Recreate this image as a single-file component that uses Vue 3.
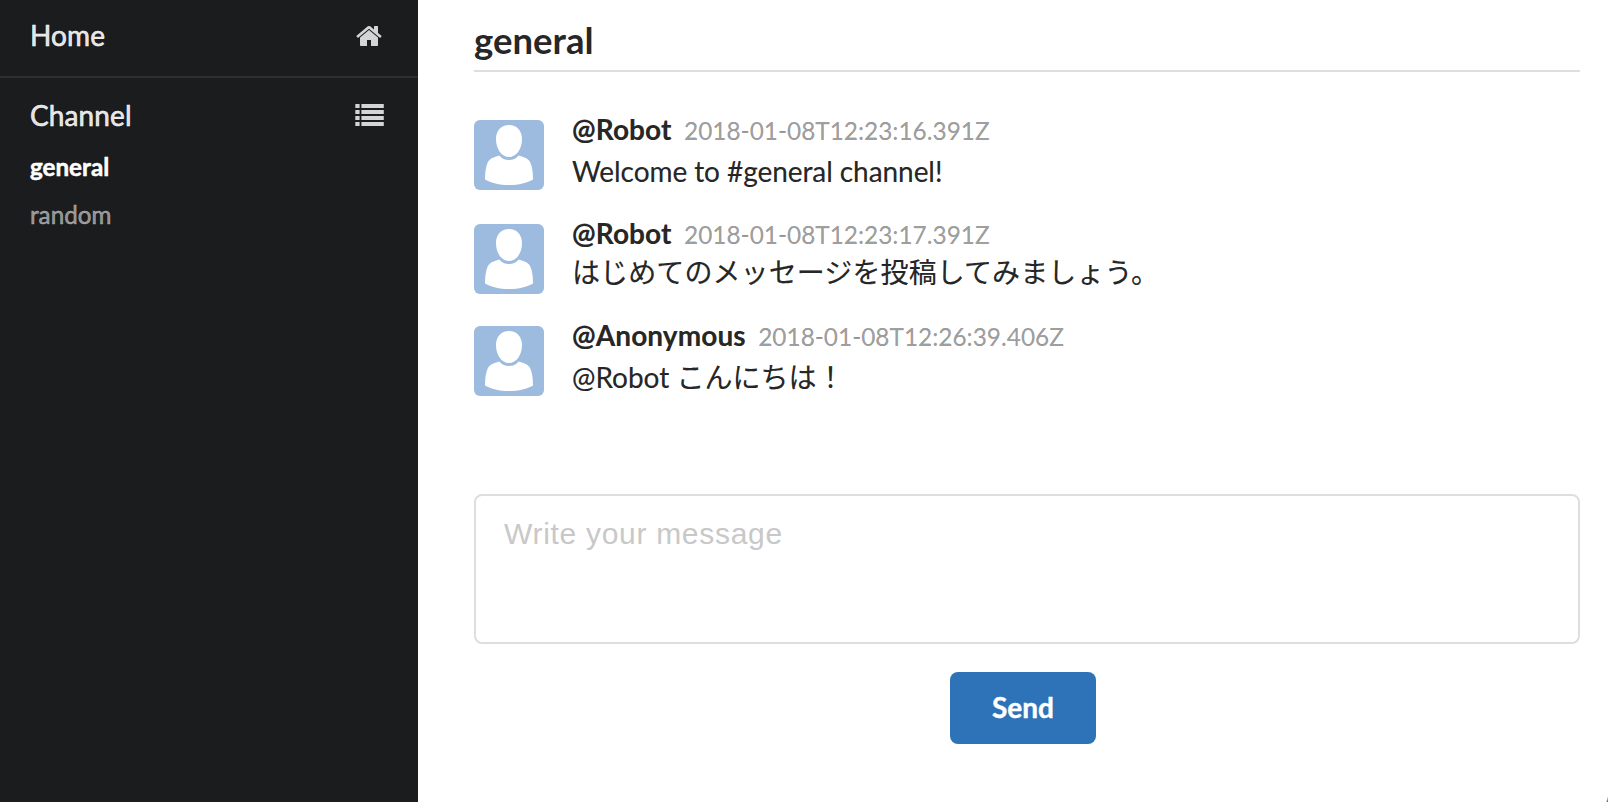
<script setup>
import { ref } from 'vue'

const channels = ['general', 'random']
const current = ref('general')
const draft = ref('')
const messages = [
  { user: '@Robot', time: '2018-01-08T12:23:16.391Z', text: 'Welcome to #general channel!' },
  { user: '@Robot', time: '2018-01-08T12:23:17.391Z', text: 'はじめてのメッセージを投稿してみましょう。', cjk: true },
  { user: '@Anonymous', time: '2018-01-08T12:26:39.406Z', text: '@Robot こんにちは！', mixed: true },
]
</script>

<template>
  <div class="app">
    <nav class="sidebar">
      <div class="item home">
        <span class="title">Home</span>
        <svg class="home-icon" viewBox="0 0 1664 1792">
          <path d="M1408 992v480q0 26-19 45t-45 19h-384v-384h-256v384h-384q-26 0-45-19t-19-45v-480q0-1 .5-3t.5-3l575-474 575 474q1 2 1 6zm223-69l-62 74q-8 9-21 11h-3q-13 0-21-7l-692-577-692 577q-12 8-24 7-13-2-21-11l-62-74q-8-10-7-23.5t11-21.5l719-599q32-26 76-26t76 26l244 204v-195q0-14 9-23t23-9h192q14 0 23 9t9 23v408l219 182q10 8 11 21.5t-7 23.5z" />
        </svg>
      </div>
      <div class="item channel">
        <span class="title">Channel</span>
        <svg class="list-icon" viewBox="0 0 29 22">
          <g v-for="n in 4" :key="n">
            <rect x="0.3" :y="(n - 1) * 6" width="4.3" height="4" rx="0.5" />
            <rect x="6.4" :y="(n - 1) * 6" width="22.4" height="4" rx="0.5" />
          </g>
        </svg>
      </div>
      <a v-for="c in channels" :key="c" class="link" :class="{ active: c === current }" @click="current = c">{{ c }}</a>
    </nav>
    <main class="main">
      <h2 class="heading">{{ current }}</h2>
      <div class="comments">
        <div v-for="m in messages" :key="m.time" class="comment" :class="{ short: m.cjk }">
          <svg class="avatar" viewBox="0 0 70 70">
            <rect width="70" height="70" rx="6" fill="#9cbbdf" />
            <path fill="#fff" d="M35 5C43 5 48 11 48 19C48 29 42.500 37 35 37S22 29 22 19C22 11 27 5 35 5ZM25.300 35.500Q29 40 35 40T44.700 35.500Q55 38 56.300 42.500Q59 48.500 59 59.500C53 63 45 65 35 65S17 63 11 59.500Q11 48.500 13.700 42.500Q15 38 25.300 35.500Z" />
          </svg>
          <div class="content">
            <div class="meta"><span class="author">{{ m.user }}</span><span class="time">{{ m.time }}</span></div>
            <div class="text" :class="{ cjk: m.cjk, mixed: m.mixed }">{{ m.text }}</div>
          </div>
        </div>
      </div>
      <textarea v-model="draft" class="message" placeholder="Write your message"></textarea>
      <button class="send">Send</button>
    </main>
    <span class="corner"></span>
  </div>
</template>

<style>
body {
  margin: 0;
  overflow: hidden;
}
</style>

<style scoped>
.app {
  position: relative;
  display: flex;
  height: 802px;
  background: #fff;
  font-family: Lato, "Noto Sans CJK JP", sans-serif;
  font-size: 28px;
  line-height: 34px;
  color: rgba(0, 0, 0, 0.87);
}
.sidebar {
  box-sizing: border-box;
  width: 418px;
  flex: none;
  background: #1b1c1d;
}
.item {
  display: flex;
  justify-content: space-between;
  align-items: flex-start;
  box-sizing: border-box;
  padding: 0 34px 0 30px;
  color: rgba(255, 255, 255, 0.9);
}
.home {
  height: 78px;
  padding-top: 18px;
  border-bottom: 2px solid #2d2e2f;
}
.channel {
  height: 72px;
  padding-top: 20px;
}
.title {
  letter-spacing: 0.1px;
  -webkit-text-stroke: 0.6px currentColor;
}
.home-icon {
  width: 26px;
  height: 28px;
  margin: 4px 2px 0 0;
  fill: #d4d5d5;
}
.list-icon {
  width: 29px;
  height: 22px;
  margin-top: 6px;
  fill: #d4d5d5;
}
.link {
  display: block;
  height: 48px;
  padding-left: 30px;
  font-size: 24.2px;
  color: rgba(255, 255, 255, 0.5);
  -webkit-text-stroke: 0.5px currentColor;
}
.link.active {
  font-weight: 700;
  color: #fff;
}
.main {
  flex: 1;
  display: flex;
  flex-direction: column;
  padding: 0 28px 0 56px;
}
.heading {
  box-sizing: border-box;
  height: 72px;
  margin: 0;
  padding-top: 18px;
  border-bottom: 2px solid #dededf;
  font-size: 36.5px;
  line-height: 44px;
  font-weight: 700;
}
.comments {
  height: 374px;
  padding-top: 48px;
}
.comment {
  display: flex;
  gap: 28px;
  height: 104px;
}
.comment.short {
  height: 102px;
}
.avatar {
  width: 70px;
  height: 70px;
}
.content {
  margin-top: -8px;
  -webkit-text-stroke: 0.2px currentColor;
}
.meta {
  height: 42px;
}
.author {
  font-weight: 700;
  letter-spacing: 0.1px;
}
.time {
  margin-left: 12.5px;
  font-size: 24.4px;
  color: rgba(0, 0, 0, 0.4);
}
.text {
  letter-spacing: -0.07px;
}
.text.cjk {
  margin-top: -3px;
  letter-spacing: 0.1px;
}
.text.mixed {
  letter-spacing: 0;
}
.message {
  box-sizing: border-box;
  height: 150px;
  padding: 20px 28px;
  border: 2px solid #dededf;
  border-radius: 8px;
  resize: none;
  outline: none;
  background: #fff;
  font-family: "Liberation Sans", "Noto Sans CJK JP", sans-serif;
  font-size: 30px;
  line-height: 36px;
  letter-spacing: 0.7px;
}
.message::placeholder {
  color: #c8c8c8;
  opacity: 1;
}
.send {
  width: 146px;
  height: 72px;
  margin: 28px 0 0 476px;
  padding: 0 0 2px;
  border: 0;
  border-radius: 8px;
  background: #2e72b8;
  color: #fff;
  font-family: Lato, sans-serif;
  font-size: 28px;
  font-weight: 700;
  -webkit-text-stroke: 0.4px currentColor;
}
.corner {
  position: absolute;
  right: 0;
  bottom: 0;
  width: 2px;
  height: 6px;
  background: linear-gradient(to bottom right, transparent 40%, #333);
}
</style>
